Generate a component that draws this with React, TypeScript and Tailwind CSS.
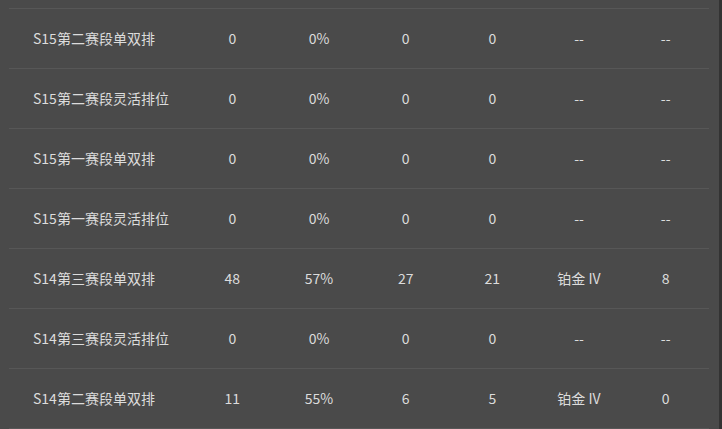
const rows = [
  ["S15第二赛段单双排", "0", "0%", "0", "0", "--", "--"],
  ["S15第二赛段灵活排位", "0", "0%", "0", "0", "--", "--"],
  ["S15第一赛段单双排", "0", "0%", "0", "0", "--", "--"],
  ["S15第一赛段灵活排位", "0", "0%", "0", "0", "--", "--"],
  ["S14第三赛段单双排", "48", "57%", "27", "21", "铂金 IV", "8"],
  ["S14第三赛段灵活排位", "0", "0%", "0", "0", "--", "--"],
  ["S14第二赛段单双排", "11", "55%", "6", "5", "铂金 IV", "0"],
];

const App = () => {
  return (
    <div
      className="flex w-[722px] h-[429px] overflow-hidden bg-[#4a4a4a] text-[14px] text-[#dcdcdc]"
      style={{ fontFamily: '"Noto Sans CJK SC", "Noto Sans", sans-serif' }}
    >
      <div className="flex-1 pl-[9px] pr-[10px] pt-2">
        <div className="border-t border-[#575757]">
          {rows.map((row) => (
            <div
              key={row[0]}
              className="grid grid-cols-[180px_repeat(6,1fr)] h-[60px] items-center border-b border-[#575757]"
            >
              <span className="pl-6">{row[0]}</span>
              {row.slice(1).map((cell, i) => (
                <span key={i} className="text-center">
                  {cell}
                </span>
              ))}
            </div>
          ))}
        </div>
      </div>
      <div className="w-[3px] bg-[#333333]" />
    </div>
  );
};

export default App;
